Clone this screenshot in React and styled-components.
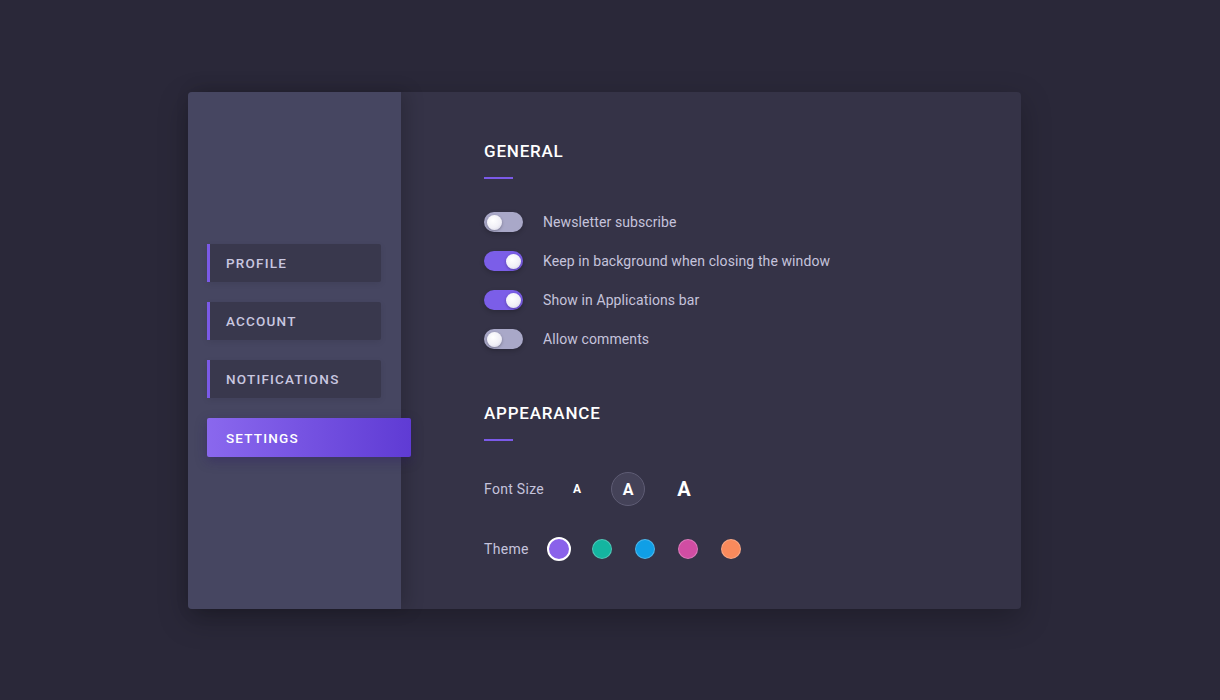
import React, { useState } from 'react';
import styled, { createGlobalStyle } from 'styled-components';

const GlobalStyle = createGlobalStyle`
  html, body {
    margin: 0;
    padding: 0;
    background: #2a2839;
    font-family: Roboto, 'Liberation Sans', sans-serif;
  }
  * { box-sizing: border-box; }
`;

const Page = styled.div`
  width: 1220px;
  height: 700px;
  display: flex;
  align-items: flex-start;
  justify-content: flex-start;
  padding: 92px 0 0 188px;
`;

const Card = styled.div`
  width: 833px;
  height: 517px;
  display: flex;
  border-radius: 4px;
  background: #353347;
  box-shadow: 0 10px 30px rgba(0, 0, 0, 0.25);
`;

const Sidebar = styled.nav`
  width: 213px;
  flex-shrink: 0;
  background: #464661;
  border-radius: 4px 0 0 4px;
  display: flex;
  flex-direction: column;
  justify-content: center;
  gap: 20px;
  padding-left: 19px;
  position: relative;
  z-index: 1;
  box-shadow: 6px 0 18px rgba(0, 0, 0, 0.18);
`;

const NavItem = styled.div`
  height: ${(p) => (p.$active ? 39 : 38)}px;
  width: ${(p) => (p.$active ? 204 : 174)}px;
  display: flex;
  align-items: center;
  padding-left: ${(p) => (p.$active ? 19 : 16)}px;
  font-size: 13.5px;
  font-weight: 500;
  letter-spacing: 1.2px;
  color: ${(p) => (p.$active ? '#ffffff' : '#c9c7e0')};
  background: ${(p) =>
    p.$active ? 'linear-gradient(90deg, #8a68ee 0%, #5f3bd4 100%)' : '#39384d'};
  border-left: ${(p) => (p.$active ? 'none' : '3px solid #7b5ae8')};
  border-radius: ${(p) => (p.$active ? '2px' : '0 2px 2px 0')};
  box-shadow: ${(p) =>
    p.$active ? '0 4px 12px rgba(40, 20, 100, 0.35)' : '0 2px 6px rgba(0,0,0,0.08)'};
  cursor: pointer;
`;

const Main = styled.main`
  flex: 1;
  padding: 49px 0 0 83px;
  display: flex;
  flex-direction: column;
`;

const Section = styled.section`
  display: flex;
  flex-direction: column;
  margin-bottom: ${(p) => p.$gap || 0}px;
`;

const Heading = styled.h2`
  margin: 0;
  font-size: 17px;
  font-weight: 500;
  letter-spacing: 0.8px;
  color: #ffffff;
  line-height: 20px;
`;

const Underline = styled.div`
  width: 29px;
  height: 2px;
  background: #7b5ae8;
  margin: 16px 0 ${(p) => p.$after}px;
`;

const ToggleList = styled.div`
  display: flex;
  flex-direction: column;
  gap: 19px;
`;

const Row = styled.label`
  display: flex;
  align-items: center;
  height: 20px;
  gap: 20px;
  font-size: 14px;
  letter-spacing: 0.1px;
  color: #c5c3dc;
  cursor: pointer;
`;

const Track = styled.span`
  width: 39px;
  height: 20px;
  border-radius: 10px;
  background: ${(p) => (p.$on ? '#7b5ee8' : '#a9a8c8')};
  display: flex;
  align-items: center;
  justify-content: ${(p) => (p.$on ? 'flex-end' : 'flex-start')};
  padding: 0 2.5px;
  box-shadow: 0 2px 5px rgba(0, 0, 0, 0.2);
`;

const Knob = styled.span`
  width: 15px;
  height: 15px;
  border-radius: 50%;
  background: radial-gradient(circle at 40% 35%, #ffffff 0%, #f1f0f7 55%, #cfcde0 100%);
  box-shadow: 0 1px 3px rgba(0, 0, 0, 0.3);
`;

const OptionRow = styled.div`
  display: flex;
  align-items: center;
  height: 36px;
  margin-bottom: ${(p) => p.$mb || 0}px;
`;

const OptionLabel = styled.span`
  font-size: 14px;
  letter-spacing: 0.3px;
  color: #c5c3dc;
  width: ${(p) => p.$w}px;
  flex-shrink: 0;
`;

const SizeButton = styled.button`
  width: 34px;
  height: 34px;
  border-radius: 50%;
  padding: 0;
  display: flex;
  align-items: center;
  justify-content: center;
  font-family: Roboto, 'Liberation Sans', sans-serif;
  font-weight: 700;
  font-size: ${(p) => p.$size}px;
  color: #ffffff;
  background: ${(p) => (p.$active ? '#444258' : 'transparent')};
  border: 1px solid ${(p) => (p.$active ? '#5e5c74' : 'transparent')};
  margin-right: ${(p) => p.$mr}px;
  cursor: pointer;
`;

const Swatch = styled.button`
  width: ${(p) => (p.$active ? 24 : 20)}px;
  height: ${(p) => (p.$active ? 24 : 20)}px;
  border-radius: 50%;
  padding: 0;
  background: ${(p) => p.$color};
  border: ${(p) => (p.$active ? '2px solid #ffffff' : '1px solid rgba(255,255,255,0.25)')};
  margin-right: ${(p) => (p.$active ? 21 : 23)}px;
  cursor: pointer;
`;

const navItems = ['PROFILE', 'ACCOUNT', 'NOTIFICATIONS', 'SETTINGS'];

const toggles = [
  { label: 'Newsletter subscribe', on: false },
  { label: 'Keep in background when closing the window', on: true },
  { label: 'Show in Applications bar', on: true },
  { label: 'Allow comments', on: false },
];

const themes = ['#8a62ea', '#14b5a0', '#109fe6', '#d14da3', '#f98a5c'];

const App = () => {
  const [settings, setSettings] = useState(toggles);
  const [fontSize, setFontSize] = useState(1);
  const [theme, setTheme] = useState(0);

  const flip = (i) =>
    setSettings(settings.map((s, j) => (j === i ? { ...s, on: !s.on } : s)));

  return (
    <>
      <GlobalStyle />
      <Page>
        <Card>
          <Sidebar>
            {navItems.map((item) => (
              <NavItem key={item} $active={item === 'SETTINGS'}>
                {item}
              </NavItem>
            ))}
          </Sidebar>
          <Main>
            <Section $gap={54}>
              <Heading>GENERAL</Heading>
              <Underline $after={33} />
              <ToggleList>
                {settings.map((s, i) => (
                  <Row key={s.label} onClick={() => flip(i)}>
                    <Track $on={s.on}>
                      <Knob />
                    </Track>
                    {s.label}
                  </Row>
                ))}
              </ToggleList>
            </Section>
            <Section>
              <Heading>APPEARANCE</Heading>
              <Underline $after={30} />
              <OptionRow $mb={24}>
                <OptionLabel $w={76}>Font Size</OptionLabel>
                {[12, 16, 20].map((size, i) => (
                  <SizeButton
                    key={size}
                    $size={size}
                    $active={fontSize === i}
                    $mr={i === 0 ? 17 : 22}
                    onClick={() => setFontSize(i)}
                  >
                    A
                  </SizeButton>
                ))}
              </OptionRow>
              <OptionRow>
                <OptionLabel $w={63}>Theme</OptionLabel>
                {themes.map((c, i) => (
                  <Swatch
                    key={c}
                    $color={c}
                    $active={theme === i}
                    onClick={() => setTheme(i)}
                  />
                ))}
              </OptionRow>
            </Section>
          </Main>
        </Card>
      </Page>
    </>
  );
};

export default App;
